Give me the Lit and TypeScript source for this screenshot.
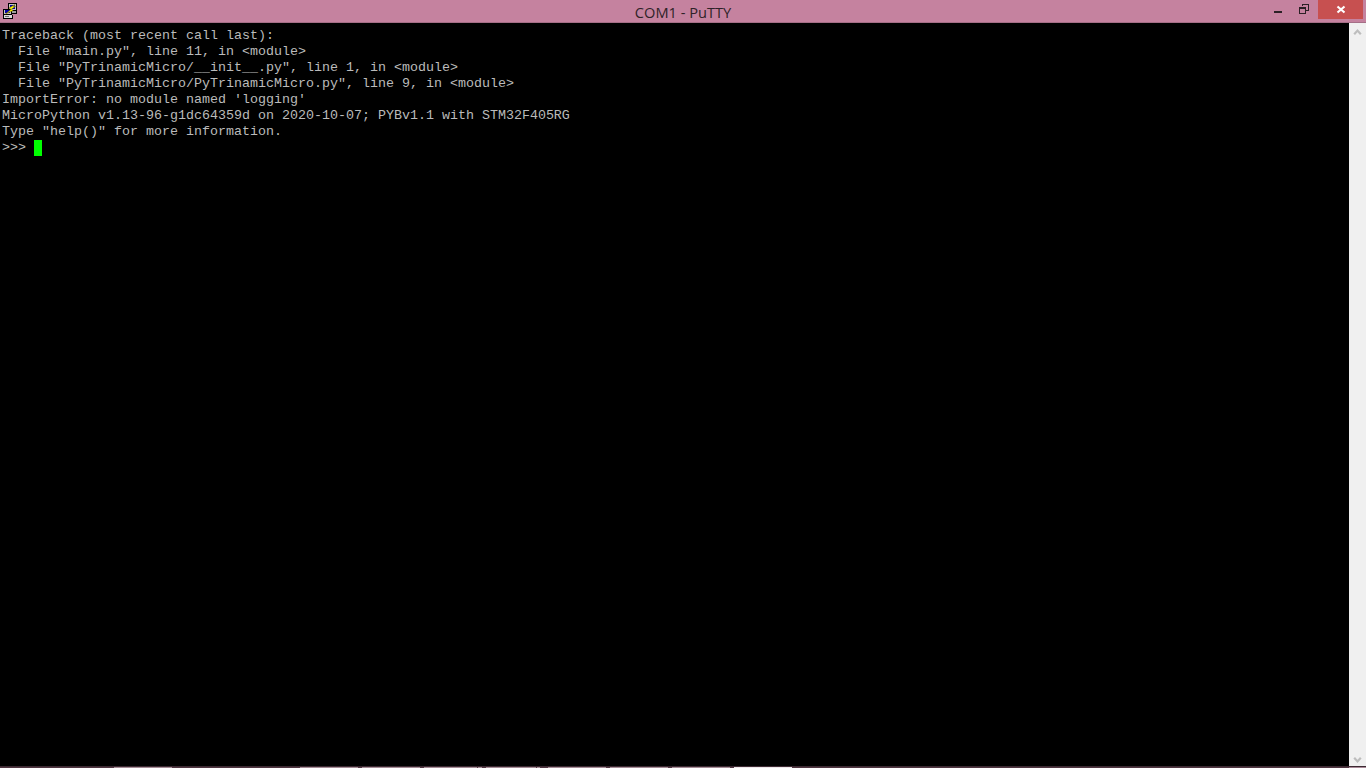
import { LitElement, html, css, svg } from "lit";
import { customElement } from "lit/decorators.js";

const LINES = [
  "Traceback (most recent call last):",
  '  File "main.py", line 11, in <module>',
  '  File "PyTrinamicMicro/__init__.py", line 1, in <module>',
  '  File "PyTrinamicMicro/PyTrinamicMicro.py", line 9, in <module>',
  "ImportError: no module named 'logging'",
  "MicroPython v1.13-96-g1dc64359d on 2020-10-07; PYBv1.1 with STM32F405RG",
  'Type "help()" for more information.',
];

const dark = "#4f3540";
const mid = "#a38b95";
const light = "#ece6e9";
const SEGMENTS: [number, string][] = [
  [114, dark], [58, mid], [128, dark], [58, mid], [4, dark], [58, mid], [4, dark], [53, mid],
  [1, dark], [4, mid], [4, dark], [50, mid], [1, dark], [3, mid], [8, dark], [58, mid],
  [4, dark], [58, mid], [4, dark], [58, mid], [4, dark], [58, light], [557, dark], [17, "#a98a98"],
];

@customElement("app-root")
export class AppRoot extends LitElement {
  static styles = css`
    :host { display: block; width: 1366px; height: 768px; overflow: hidden; background: #000; }
    .window { display: flex; flex-direction: column; height: 768px; }
    .titlebar { position: relative; flex: none; height: 23px; background: #c5829f; box-sizing: border-box; border-bottom: 1px solid #a56f87; display: flex; align-items: flex-start; }
    .appicon { flex: none; margin: 2px 0 0 2px; width: 17px; height: 17px; display: block; }
    .title { position: absolute; left: 0; right: 0; top: 3px; text-align: center; font: 14.6px/18px "Open Sans", sans-serif; color: #2f2228; }
    .controls { margin-left: auto; display: flex; margin-right: 3px; }
    .ctl { width: 26px; height: 19px; }
    .ctl svg { display: block; }
    .close { width: 45px; background: #c75050; }
    .body { flex: 1; display: flex; min-height: 0; }
    .term { flex: 1; background: #000; color: #bbbbbb; font: 13.333px/16px "Liberation Mono", "Courier New", monospace; padding: 5px 0 0 2px; white-space: pre; }
    .line { height: 16px; }
    .cursor { display: inline-block; width: 8px; height: 16px; background: #00ff00; vertical-align: top; }
    .scroll { flex: none; width: 17px; background: #f0f0f0; display: flex; flex-direction: column; justify-content: space-between; align-items: center; }
    .arrow { width: 17px; height: 17px; display: block; }
    .strip { flex: none; height: 2px; display: flex; border-top: 1px solid #3c2a32; box-sizing: border-box; }
    .strip div { height: 1px; }
  `;

  private icon() {
    return svg`<svg class="appicon" viewBox="2 2 17 17" shape-rendering="crispEdges">
      <rect x="8" y="3" width="9" height="8" fill="#000"/>
      <rect x="9" y="4" width="7" height="6" fill="#c6c6c6"/>
      <rect x="10" y="5" width="5" height="4" fill="#0000a8"/>
      <rect x="10" y="11" width="7" height="3" fill="#000"/>
      <rect x="11" y="11" width="5" height="2" fill="#a0a0a0"/>
      <rect x="3" y="9" width="9" height="6" fill="#000"/>
      <rect x="4" y="10" width="7" height="4" fill="#c6c6c6"/>
      <rect x="5" y="10" width="5" height="3" fill="#0000a8"/>
      <rect x="3" y="15" width="10" height="4" fill="#000"/>
      <rect x="4" y="15" width="8" height="3" fill="#dcdcdc"/>
      <rect x="5" y="16" width="4" height="1" fill="#707070"/>
      <path d="M15 4.5 L9 8 L11 9.5 L5.5 14 L13 10.5 L11.5 9 L15.5 6.5 L13.5 6.5 Z" fill="#ffff00" stroke="#6e6000" stroke-width=".5" shape-rendering="auto"/>
    </svg>`;
  }

  render() {
    return html`<div class="window">
      <div class="titlebar">
        ${this.icon()}
        <div class="title">COM1 - PuTTY</div>
        <div class="controls">
          <div class="ctl"><svg width="26" height="19" shape-rendering="crispEdges"><rect x="8" y="11" width="8" height="2" fill="#2b2025"/></svg></div>
          <div class="ctl"><svg width="26" height="19" shape-rendering="crispEdges" fill="none" stroke="#2b2025"><path d="M10.5 6V4.5H16.5V10.5H14"/><path d="M7.5 7.5H13.5V13.5H7.5Z"/><path d="M7 8.5H14"/></svg></div>
          <div class="ctl close"><svg width="45" height="19"><path d="M19.5 6.5 L26.5 12.5 M26.5 6.5 L19.5 12.5" stroke="#fff" stroke-width="2.2"/></svg></div>
        </div>
      </div>
      <div class="body">
        <div class="term">${LINES.map((l) => html`<div class="line">${l}</div>`)}<div class="line">&gt;&gt;&gt; <span class="cursor"></span></div></div>
        <div class="scroll">
          <svg class="arrow" viewBox="0 0 17 17"><path d="M5.2 11.2 L8.5 7.6 L11.8 11.2" fill="none" stroke="#bdbdbd" stroke-width="2.2"/></svg>
          <svg class="arrow" viewBox="0 0 17 17"><path d="M5.2 8.8 L8.5 12.4 L11.8 8.8" fill="none" stroke="#bdbdbd" stroke-width="2.2"/></svg>
        </div>
      </div>
      <div class="strip">${SEGMENTS.map(([w, c]) => html`<div style="width:${w}px;background:${c}"></div>`)}</div>
    </div>`;
  }
}
